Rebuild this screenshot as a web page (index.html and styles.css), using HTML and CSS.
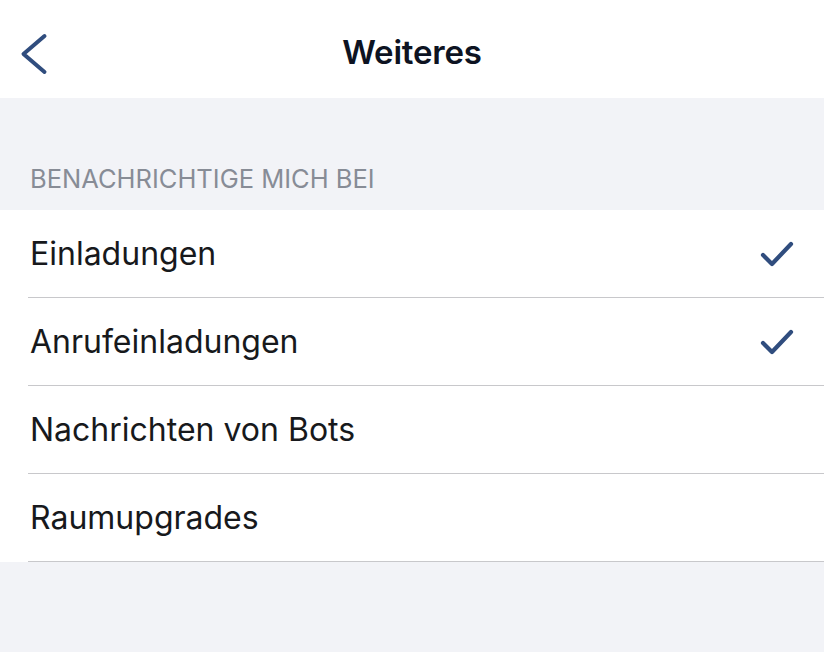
FILE: index.html
```html
<!DOCTYPE html>
<html lang="de">
<head>
<meta charset="utf-8">
<link rel="stylesheet" href="styles.css">
</head>
<body>
<div class="page">
  <header class="navbar">
    <button class="back" aria-label="Zurück">
      <svg width="28" height="44" viewBox="0 0 28 44"><path d="M24.5 4 L3.5 22 L24.5 40" fill="none" stroke="#304d7e" stroke-width="4" stroke-linecap="round" stroke-linejoin="round"/></svg>
    </button>
    <h1 class="title">Weiteres</h1>
  </header>
  <div class="section-header">BENACHRICHTIGE MICH BEI</div>
  <ul class="list">
    <li class="row"><span class="label">Einladungen</span><svg class="check" width="34" height="28" viewBox="0 0 34 28"><path d="M3 15 L12 24 L31 4" fill="none" stroke="#304d7e" stroke-width="4.2" stroke-linecap="round" stroke-linejoin="round"/></svg></li>
    <li class="row"><span class="label">Anrufeinladungen</span><svg class="check" width="34" height="28" viewBox="0 0 34 28"><path d="M3 15 L12 24 L31 4" fill="none" stroke="#304d7e" stroke-width="4.2" stroke-linecap="round" stroke-linejoin="round"/></svg></li>
    <li class="row"><span class="label">Nachrichten von Bots</span></li>
    <li class="row"><span class="label">Raumupgrades</span></li>
  </ul>
</div>
</body>
</html>
```
FILE: styles.css
```css
html, body {
  margin: 0;
  padding: 0;
  background: #f2f3f7;
  font-family: Inter, "Noto Sans", sans-serif;
}
.page {
  width: 824px;
  height: 652px;
  background: #f2f3f7;
}
.navbar {
  position: relative;
  height: 98px;
  background: #ffffff;
  display: flex;
  align-items: center;
  justify-content: center;
}
.back {
  position: absolute;
  left: 20px;
  top: 32px;
  border: 0;
  padding: 0;
  background: none;
  display: flex;
}
.title {
  margin: 0;
  font-size: 33px;
  font-weight: 600;
  color: #0d1322;
  letter-spacing: -0.2px;
  margin-top: 6px;
}
.section-header {
  height: 112px;
  box-sizing: border-box;
  padding: 0 30px 16px;
  display: flex;
  align-items: flex-end;
  font-size: 25.5px;
  color: #878c96;
  letter-spacing: 0;
}
.list {
  list-style: none;
  margin: 0;
  padding: 0;
  background: #ffffff;
}
.row {
  margin-left: 28px;
  height: 88px;
  box-sizing: border-box;
  border-bottom: 1px solid #c8c8cb;
  display: flex;
  align-items: center;
  justify-content: space-between;
  padding-right: 30px;
}
.label {
  font-size: 32px;
  color: #17191c;
  padding-left: 2px;
  letter-spacing: 0;
}
.check {
  display: block;
}
```
